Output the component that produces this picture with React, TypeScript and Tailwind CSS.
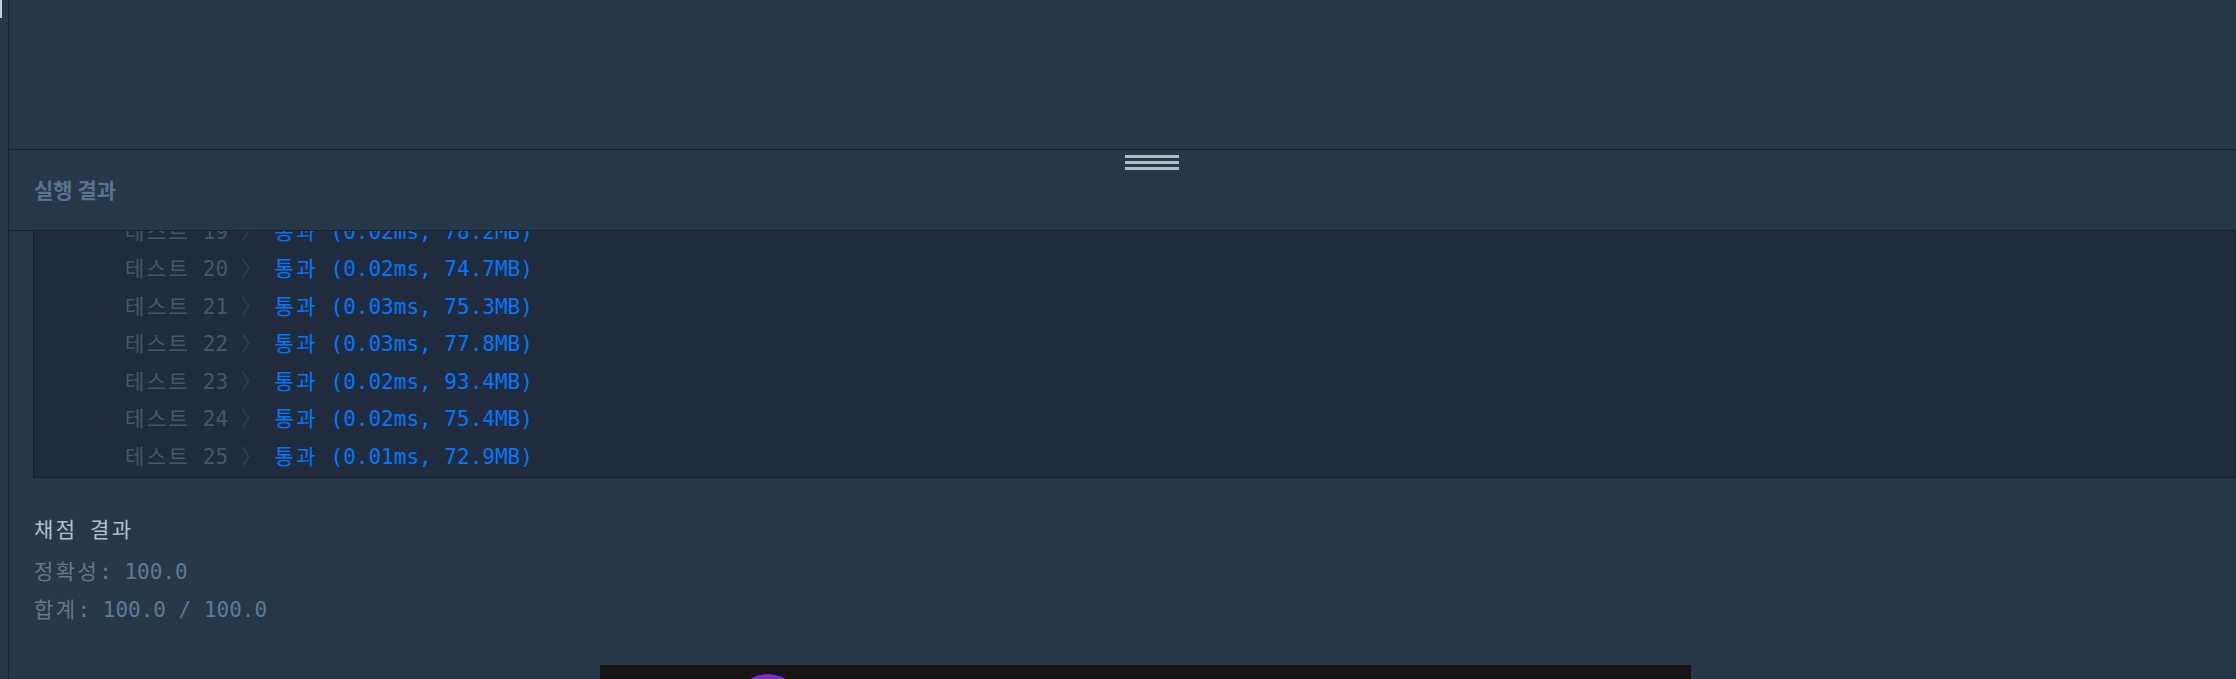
import React from 'react';

const results = [
  { no: 19, time: '0.02ms', mem: '78.2MB' },
  { no: 20, time: '0.02ms', mem: '74.7MB' },
  { no: 21, time: '0.03ms', mem: '75.3MB' },
  { no: 22, time: '0.03ms', mem: '77.8MB' },
  { no: 23, time: '0.02ms', mem: '93.4MB' },
  { no: 24, time: '0.02ms', mem: '75.4MB' },
  { no: 25, time: '0.01ms', mem: '72.9MB' },
];

const mono = "font-['DejaVu_Sans_Mono','Noto_Sans_CJK_KR',monospace]";

// hangul in the console font is a little wider than the CJK fallback
const Ko: React.FC<{ children: React.ReactNode; className?: string }> = ({ children, className = '' }) => (
  <span className={`tracking-[2.4px] ${className}`}>{children}</span>
);

const App: React.FC = () => {
  return (
    <div className="w-[2236px] h-[679px] flex overflow-hidden bg-[#263747]">
      {/* left gutter */}
      <div className="relative w-[9px] shrink-0 border-r border-[#1b2634]">
        <div className="absolute left-0 top-0 w-[2px] h-[18px] bg-[#c5cdd5]" />
      </div>

      <div className="flex-1 min-w-0 flex flex-col">
        {/* editor area (empty) */}
        <div className="h-[150px] shrink-0 border-b border-[#18222f]" />

        {/* output header */}
        <div className="relative h-[81px] shrink-0 flex items-center pl-[25px] border-b border-[#18222f]">
          <div className="absolute left-[1116px] top-[5px] flex flex-col gap-[3px]">
            <div className="w-[54px] h-[3px] bg-[#b0bec5]" />
            <div className="w-[54px] h-[3px] bg-[#b0bec5]" />
            <div className="w-[54px] h-[3px] bg-[#b0bec5]" />
          </div>
          <h2 className="text-[21px] font-bold text-[#567390] font-['Noto_Sans_CJK_KR',sans-serif]">실행 결과</h2>
        </div>

        {/* output console */}
        <div className={`ml-[24px] h-[247px] shrink-0 flex flex-col justify-end overflow-hidden bg-[#202b3d] border-l border-r border-b border-[#18222f] pl-[91px] pb-[1px] text-[21px] ${mono}`}>
          {results.map((r) => (
            <div key={r.no} className="leading-[37.5px] whitespace-pre shrink-0">
              <span className="text-[#44576c]">
                <Ko>테스트</Ko> {r.no}{' '}
              </span>
              <span className="text-[#323f50]">〉</span>
              <span className="text-[#0078ff]">
                {' '}
                <Ko>통과</Ko> ({r.time}, {r.mem})
              </span>
            </div>
          ))}
        </div>

        {/* grading result */}
        <div className={`pl-[25px] mt-[33px] text-[21px] ${mono}`}>
          <div className="leading-[38px] text-[#b4c1cc] whitespace-pre">
            <Ko>채점</Ko> <Ko>결과</Ko>
          </div>
          <div className="mt-[4px] leading-[38px] text-[#5c7b96] whitespace-pre">
            <Ko className="text-[#62788c]">정확성</Ko>: 100.0
          </div>
          <div className="leading-[38px] text-[#5c7b96] whitespace-pre">
            <Ko className="text-[#62788c]">합계</Ko>: 100.0 / 100.0
          </div>
        </div>

        {/* bottom preview */}
        <div className="relative ml-[591px] mt-[36px] w-[1091px] h-[120px] shrink-0 bg-[#151515]">
          <div className="absolute left-[133px] top-[9px] w-[70px] h-[70px] rounded-full bg-[#7e2ad0]" />
        </div>
      </div>
    </div>
  );
};

export default App;
